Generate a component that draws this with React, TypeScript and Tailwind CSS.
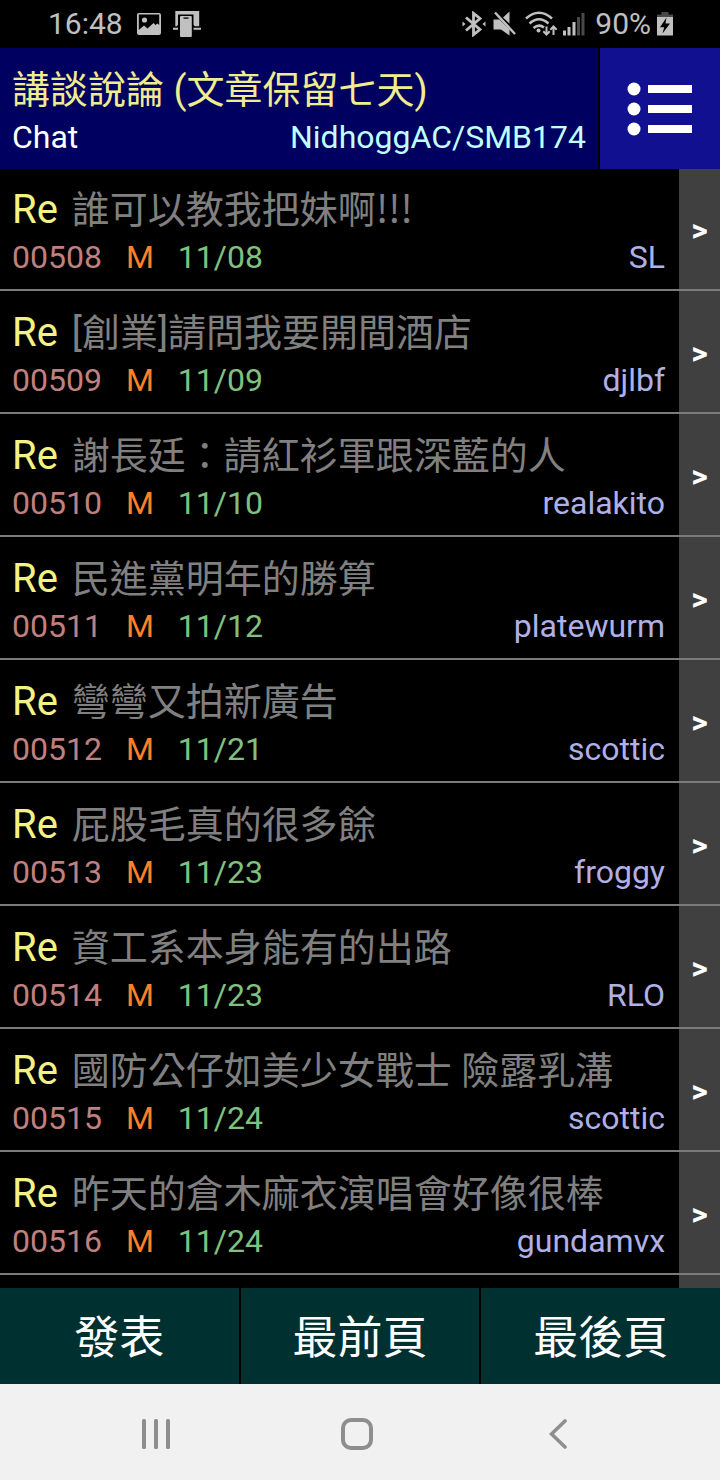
import React from "react";

type Post = { id: string; title: string; date: string; author: string };

const posts: Post[] = [
  { id: "00508", title: "誰可以教我把妹啊!!!", date: "11/08", author: "SL" },
  { id: "00509", title: "[創業]請問我要開間酒店", date: "11/09", author: "djlbf" },
  { id: "00510", title: "謝長廷：請紅衫軍跟深藍的人", date: "11/10", author: "realakito" },
  { id: "00511", title: "民進黨明年的勝算", date: "11/12", author: "platewurm" },
  { id: "00512", title: "彎彎又拍新廣告", date: "11/21", author: "scottic" },
  { id: "00513", title: "屁股毛真的很多餘", date: "11/23", author: "froggy" },
  { id: "00514", title: "資工系本身能有的出路", date: "11/23", author: "RLO" },
  { id: "00515", title: "國防公仔如美少女戰士 險露乳溝", date: "11/24", author: "scottic" },
  { id: "00516", title: "昨天的倉木麻衣演唱會好像很棒", date: "11/24", author: "gundamvx" },
];

function StatusBar() {
  return (
    <div className="flex h-12 shrink-0 items-center justify-between bg-black pl-12 pr-[47px] text-[30px] leading-[48px] text-[#c0c0c0]">
      <div className="flex items-center">
        <span>16:48</span>
        <svg className="ml-3.5" width="24" height="24" viewBox="0 0 24 24" fill="currentColor" aria-label="Picture">
          <path fillRule="evenodd" d="M2 1h20a2 2 0 0 1 2 2v18a2 2 0 0 1-2 2H2a2 2 0 0 1-2-2V3a2 2 0 0 1 2-2ZM1.800 2.600V18l5.200-4.500 3.500 3 6-5.500 2 2 2-1.500 1.700 1.500V2.600Z" />
          <circle cx="7.500" cy="8" r="2.600" />
        </svg>
        <svg className="ml-3" width="28" height="26" viewBox="0 0 28 26" fill="currentColor" aria-label="Device">
          <path d="M2.300 0h23.900v15.300h-4.400l-1.300-1.500V3.600H5v10.200l-1.300 1.500H2.300Z" />
          <path d="M0 16.800h5v2H0zM20.500 16.800H28v2h-7.500z" />
          <rect x="7" y="5" width="11.800" height="21" rx="1" />
          <path d="M10.500 6.300h5v1.600h-5z" fill="#222" />
        </svg>
      </div>
      <div className="flex items-center">
        <svg width="24" height="26" viewBox="0 0 24 26" fill="none" stroke="currentColor" strokeWidth="2.800" aria-label="Bluetooth">
          <path d="M4 6.500 18 18.500l-6.500 5.200V2.300L18 7.500 4 19.500" />
          <path d="M0.500 10.500 3.500 13l-3 2.500zM23.500 10.500l-3 2.500 3 2.500z" fill="currentColor" stroke="none" />
        </svg>
        <svg className="ml-[7px]" width="24" height="26" viewBox="0 0 24 26" fill="currentColor" aria-label="Muted">
          <path d="M0.500 8.500h6l10 10v6L8 18.500H0.500zM10 6.500 16.500 0.500v12z" />
          <path d="M2 1.500 22 23" stroke="currentColor" strokeWidth="2.400" />
        </svg>
        <svg className="ml-2" width="34" height="26" viewBox="0 0 34 26" fill="none" stroke="currentColor" strokeWidth="2.600" aria-label="Wi-Fi">
          <path d="M1 7.500Q14-4 27 7.500M4.500 12.500Q14 4 23.500 12.500M8.500 17Q14 12.500 19 16.500" />
          <circle cx="13.500" cy="19.500" r="2" fill="currentColor" stroke="none" />
          <path d="M21.500 15.500v7.500M18.300 20.300l3.200 3.200 3.200-3.200M28.500 24v-8M25.300 18.700l3.200-3.200 3.200 3.200" strokeWidth="2" />
        </svg>
        <svg className="ml-1" width="22" height="26" viewBox="0 0 22 26" fill="currentColor" aria-label="Signal">
          <path d="M0 19.500h3V24.500H0zM4.500 16h3v8.500h-3zM9.500 11h3v13.500h-3z" />
          <path d="M14 6h3v18.500h-3zM18.500 2h3v22.500h-3z" fill="#484848" />
        </svg>
        <span className="ml-2.5">90%</span>
        <svg className="ml-1.5" width="16" height="26" viewBox="0 0 16 26" fill="currentColor" aria-label="Charging">
          <path d="M4.500 1h7v2.500H16V7H0V3.500h4.500z" fill="#484848" />
          <path d="M0 6h16v18.500H0z" />
          <path d="M9.500 6.500 3 16.200h4.200L5.500 22.500 13 12.500H8.500z" fill="#000" />
        </svg>
      </div>
    </div>
  );
}

function Header() {
  return (
    <header className="relative z-10 -mb-px flex shrink-0 gap-0.5 bg-black">
      <div className="flex min-w-0 flex-1 flex-col gap-[3px] bg-[#000060] px-3 pb-3 pt-[18px]">
        <h1 className="truncate text-[38px] leading-[48px] text-[#f0ec90]">講談說論 (文章保留七天)</h1>
        <div className="flex justify-between text-[32px] leading-[40px]">
          <span className="text-white">Chat</span>
          <span className="text-[#c0ffff]">NidhoggAC/SMB174</span>
        </div>
      </div>
      <button type="button" aria-label="Menu" className="flex w-[120px] items-center justify-center bg-[#101090] text-white">
        <svg width="66" height="54" viewBox="0 0 66 54" fill="currentColor">
          <circle cx="7" cy="7" r="6.500" />
          <circle cx="7" cy="27" r="6.500" />
          <circle cx="7" cy="47" r="6.500" />
          <path d="M21 3h44v8H21zM21 23h44v8H21zM21 43h44v8H21z" />
        </svg>
      </button>
    </header>
  );
}

// Exclamation marks take the wider form of the Chinese font.
function Title({ text }: { text: string }) {
  return (
    <span className="whitespace-nowrap text-[38px] leading-[48px] text-[#808080]">
      {text.split(/(!+)/).map((part, i) =>
        part.startsWith("!") ? (
          <span key={i} className="font-['Noto_Sans_CJK_TC',sans-serif] leading-none">
            {part}
          </span>
        ) : (
          part
        ),
      )}
    </span>
  );
}

function PostRow({ post }: { post: Post }) {
  return (
    <li className="flex border-b-2 border-[#7b7b7b]">
      <a href={"#" + post.id} className="flex min-w-0 flex-1 flex-col gap-[3px] pb-3 pl-3 pr-3.5 pt-[18px]">
        <span className="flex h-12 items-baseline gap-3.5">
          <span className="text-[40px] leading-[48px] text-[#f2f286]">Re</span>
          <Title text={post.title} />
        </span>
        <span className="flex gap-6 text-[32px] leading-[40px]">
          <span className="text-[#c08080]">{post.id}</span>
          <span className="text-[#ff8028]">M</span>
          <span className="text-[#80c080]">{post.date}</span>
          <span className="ml-auto text-[#b0b0e8]">{post.author}</span>
        </span>
      </a>
      <button type="button" aria-label={"Open " + post.id} className="w-[41px] bg-[#404040] pt-0.5 text-[32px] font-bold text-white">
        &gt;
      </button>
    </li>
  );
}

function BottomBar() {
  return (
    <div className="grid h-24 shrink-0 grid-cols-3 gap-0.5 bg-black text-[45px] text-white">
      {["發表", "最前頁", "最後頁"].map((label) => (
        <button key={label} type="button" className="bg-[#003030] pt-1.5">
          {label}
        </button>
      ))}
    </div>
  );
}

function SystemNav() {
  return (
    <nav className="grid h-24 shrink-0 grid-cols-3 bg-[#f1f1f1] pl-14 pr-[62px] text-[#8e8e8e]">
      <button type="button" aria-label="Recent apps" className="flex items-center justify-center pt-1">
        <svg width="28" height="30" viewBox="0 0 28 30" fill="currentColor">
          <rect x="0" width="4" height="30" rx="1.500" />
          <rect x="12" width="4" height="30" rx="1.500" />
          <rect x="24" width="4" height="30" rx="1.500" />
        </svg>
      </button>
      <button type="button" aria-label="Home" className="flex items-center justify-center pt-1">
        <svg width="32" height="32" viewBox="0 0 32 32" fill="none" stroke="currentColor" strokeWidth="4">
          <rect x="2" y="2" width="28" height="28" rx="8" />
        </svg>
      </button>
      <button type="button" aria-label="Back" className="flex items-center justify-center pt-1">
        <svg width="18" height="30" viewBox="0 0 18 30" fill="none" stroke="currentColor" strokeWidth="3.600" strokeLinecap="round">
          <path d="M16 2 2.500 15 16 28" />
        </svg>
      </button>
    </nav>
  );
}

export default function App() {
  return (
    <div
      lang="zh-Hant"
      className="flex min-h-screen flex-col bg-black font-['Roboto','Noto_Sans_CJK_TC',sans-serif]"
    >
      <StatusBar />
      <Header />
      <main className="flex flex-1 flex-col">
        <ul>
          {posts.map((post) => (
            <PostRow key={post.id} post={post} />
          ))}
        </ul>
        <div className="flex flex-1 justify-end">
          <div className="w-[41px] bg-[#404040]" />
        </div>
      </main>
      <BottomBar />
      <SystemNav />
    </div>
  );
}
